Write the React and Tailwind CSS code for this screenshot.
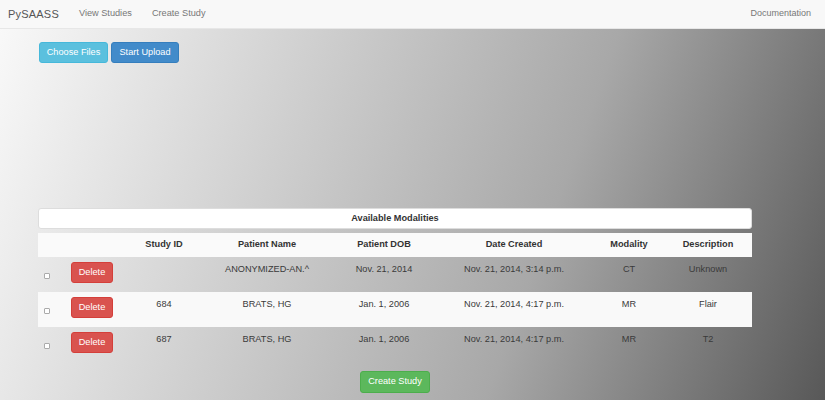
import { useState } from "react";

// filas de la tabla de estudios
const studies = [
  { id: "", name: "ANONYMIZED-AN.^", dob: "Nov. 21, 2014", created: "Nov. 21, 2014, 3:14 p.m.", modality: "CT", desc: "Unknown" },
  { id: "684", name: "BRATS, HG", dob: "Jan. 1, 2006", created: "Nov. 21, 2014, 4:17 p.m.", modality: "MR", desc: "Flair" },
  { id: "687", name: "BRATS, HG", dob: "Jan. 1, 2006", created: "Nov. 21, 2014, 4:17 p.m.", modality: "MR", desc: "T2" },
];

const cols = "grid grid-cols-[25px_58px_86px_120px_114px_146px_84px_74px_1fr]";

function Cell({ children }) {
  return <div className="flex justify-center whitespace-nowrap">{children}</div>;
}

export default function App() {
  const [checked, setChecked] = useState({});

  return (
    <div
      className="min-h-screen text-[#333] font-['Liberation_Sans',Arial,sans-serif] bg-[linear-gradient(110deg,#fafafa_0%,#a8a8a8_65%,#585858_100%)]"
    >
      {/* Navbar */}
      <nav className="h-[29px] bg-[#f8f8f8] border-b border-[#e7e7e7] flex items-center px-2">
        <span className="text-[11px] text-[#555] tracking-[0.2px]">PySAASS</span>
        <span className="ml-[20px] text-[9.2px] text-[#777]">View Studies</span>
        <span className="ml-[20px] text-[9.2px] text-[#777]">Create Study</span>
        <span className="ml-auto mr-[6px] text-[9px] text-[#777]">Documentation</span>
      </nav>

      <div className="ml-[38px] w-[714px]">
        {/* Upload */}
        <div className="flex gap-[3px] pt-[13px] pl-px">
          <button className="h-[21px] w-[69px] rounded-[3px] bg-[#5bc0de] border border-[#46b8da] text-white text-[9.2px]">
            Choose Files
          </button>
          <button className="h-[21px] w-[68px] rounded-[3px] bg-[#428bca] border border-[#357ebd] text-white text-[9.2px]">
            Start Upload
          </button>
        </div>

        {/* Panel */}
        <div className="mt-[145px] h-[21px] bg-white border border-[#ddd] rounded-[3px] flex items-center justify-center text-[9.2px] font-bold">
          Available Modalities
        </div>

        {/* Tabla */}
        <div className={`${cols} mt-[4px] h-[24px] items-center bg-[#fafafa] text-[9.2px] font-bold`}>
          <div />
          <div />
          <Cell>Study ID</Cell>
          <Cell>Patient Name</Cell>
          <Cell>Patient DOB</Cell>
          <Cell>Date Created</Cell>
          <Cell>Modality</Cell>
          <Cell>Description</Cell>
          <div />
        </div>

        {studies.map((s, i) => (
          <div
            key={i}
            className={`${cols} h-[35px] items-start pt-[5px] text-[9.2px] text-[#3a3a3a] ${i % 2 === 1 ? "bg-[#f9f9f9]" : ""}`}
          >
            <div className="pl-[6px] pt-[11px]">
              <input
                type="checkbox"
                checked={!!checked[i]}
                onChange={() => setChecked({ ...checked, [i]: !checked[i] })}
                className="appearance-none block w-[6px] h-[6px] bg-white border border-[#aaa] rounded-[1px] m-0"
              />
            </div>
            <div className="pl-[8px]">
              <button className="h-[21px] w-[42px] rounded-[3px] bg-[#d9534f] border border-[#d43f3a] text-white text-[9.2px]">
                Delete
              </button>
            </div>
            <div className="pt-[1px]"><Cell>{s.id}</Cell></div>
            <div className="pt-[1px]"><Cell>{s.name}</Cell></div>
            <div className="pt-[1px]"><Cell>{s.dob}</Cell></div>
            <div className="pt-[1px]"><Cell>{s.created}</Cell></div>
            <div className="pt-[1px]"><Cell>{s.modality}</Cell></div>
            <div className="pt-[1px]"><Cell>{s.desc}</Cell></div>
            <div />
          </div>
        ))}

        {/* Botón crear */}
        <div className="flex justify-center pt-[9px]">
          <button className="h-[22px] w-[70px] rounded-[3px] bg-[#5cb85c] border border-[#4cae4c] text-white text-[9.2px]">
            Create Study
          </button>
        </div>
      </div>
    </div>
  );
}
